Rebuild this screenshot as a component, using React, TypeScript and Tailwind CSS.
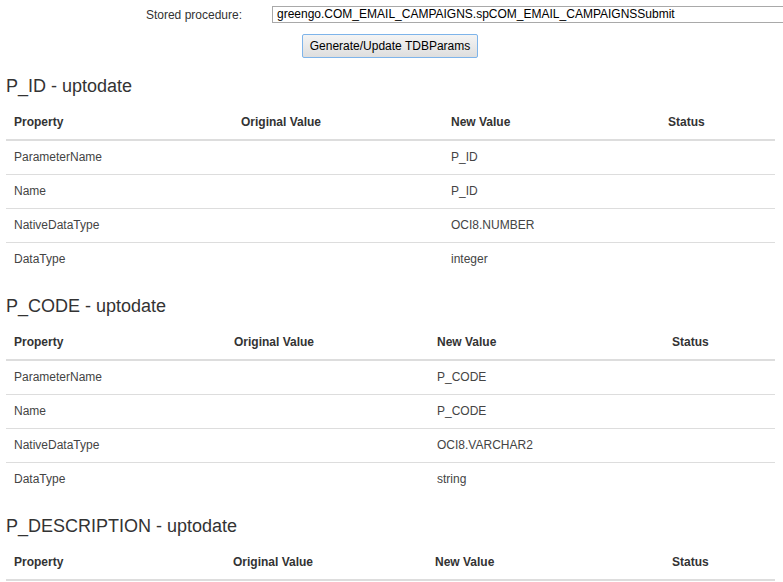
import React from "react";

type Section = {
  title: string;
  cols: number[];
  rows: [string, string][];
};

const sections: Section[] = [
  {
    title: "P_ID - uptodate",
    cols: [227, 210, 217, 115],
    rows: [
      ["ParameterName", "P_ID"],
      ["Name", "P_ID"],
      ["NativeDataType", "OCI8.NUMBER"],
      ["DataType", "integer"],
    ],
  },
  {
    title: "P_CODE - uptodate",
    cols: [220, 203, 235, 111],
    rows: [
      ["ParameterName", "P_CODE"],
      ["Name", "P_CODE"],
      ["NativeDataType", "OCI8.VARCHAR2"],
      ["DataType", "string"],
    ],
  },
  {
    title: "P_DESCRIPTION - uptodate",
    cols: [219, 202, 237, 111],
    rows: [],
  },
];

function ParamTable({ s }: { s: Section }) {
  return (
    <div className="flex flex-col">
      <h4 className="text-[18px] leading-[20px] h-[20px] font-normal text-[#333] ml-[6px] mb-[10px] whitespace-nowrap">
        {s.title}
      </h4>
      <table className="ml-[6px] w-[769px] table-fixed border-collapse mb-[20px] text-[12px]">
        <colgroup>
          {s.cols.map((w, i) => (
            <col key={i} style={{ width: w }} />
          ))}
        </colgroup>
        <thead>
          <tr>
            {["Property", "Original Value", "New Value", "Status"].map((h) => (
              <th
                key={h}
                className="text-left font-bold text-[#333] px-[8px] py-[8px] leading-[17px] border-b-2 border-[#ddd]"
              >
                {h}
              </th>
            ))}
          </tr>
        </thead>
        <tbody>
          {s.rows.map(([p, v], i) => (
            <tr key={i}>
              <td className={`px-[8px] py-[8px] leading-[17px] text-[#444] ${i > 0 ? "border-t border-[#ddd]" : ""}`}>{p}</td>
              <td className={`px-[8px] py-[8px] leading-[17px] text-[#444] ${i > 0 ? "border-t border-[#ddd]" : ""}`}></td>
              <td className={`px-[8px] py-[8px] leading-[17px] text-[#444] ${i > 0 ? "border-t border-[#ddd]" : ""}`}>{v}</td>
              <td className={`px-[8px] py-[8px] leading-[17px] text-[#444] ${i > 0 ? "border-t border-[#ddd]" : ""}`}></td>
            </tr>
          ))}
        </tbody>
      </table>
    </div>
  );
}

export default function App() {
  return (
    <div className="w-[783px] h-[582px] overflow-hidden bg-white text-[#333] font-['Liberation_Sans',Arial,sans-serif]">
      <div className="flex flex-col pt-[6px]">
        <div className="flex items-center h-[17px]">
          <div className="w-[272px] pr-[30px] text-right text-[12px] text-[#333] whitespace-nowrap">
            Stored procedure:
          </div>
          <div className="flex-1 h-[17px] border border-[#a9a9a9] px-[4px] text-[12px] leading-[15px] whitespace-nowrap overflow-hidden text-black -mr-[20px]">
            greengo.COM_EMAIL_CAMPAIGNS.spCOM_EMAIL_CAMPAIGNSSubmit
          </div>
        </div>
        <div className="mt-[10px] ml-[302px]">
          <button className="w-[176px] h-[24px] border border-[#7eb4ea] rounded-[2px] bg-gradient-to-b from-[#f4f4f4] to-[#dedede] text-[12px] text-black whitespace-nowrap">
            Generate/Update TDBParams
          </button>
        </div>
        <div className="mt-[18px] flex flex-col">
          {sections.map((s) => (
            <ParamTable key={s.title} s={s} />
          ))}
        </div>
      </div>
    </div>
  );
}
